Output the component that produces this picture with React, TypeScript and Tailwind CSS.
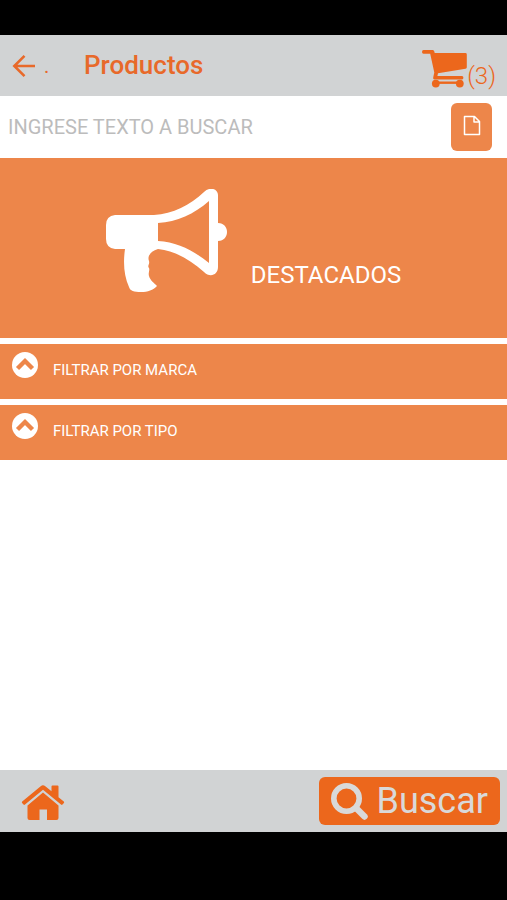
import React from "react";

interface IconProps {
  className?: string;
}

const BackIcon: React.FC<IconProps> = ({ className }) => (
  <svg viewBox="0 0 24 24" className={className} fill="none" stroke="currentColor" strokeWidth="2.6" aria-hidden="true">
    <path d="M23 12H2.5M12.5 1.8 2.3 12l10.2 10.2" />
  </svg>
);

const CartIcon: React.FC<IconProps> = ({ className }) => (
  <svg viewBox="0 0 45 38" className={className} fill="currentColor" aria-hidden="true">
    <path d="M1.5 0H10.5C11.3 0 12 .6 12.2 1.3L12.7 3H43.4Q44.8 3 44.8 4.4V17.2Q44.8 18.5 43.5 18.8L16 23.2L15.4 26H40Q41.4 26 41.4 27.7T40 29.5H12.4Q10.8 29.5 11.2 27.6L12.3 22.6L8.2 3.7H1.5Q0 3.7 0 1.9T1.5 0Z" />
    <circle cx="13.8" cy="33.6" r="3.9" />
    <circle cx="37.8" cy="33.6" r="3.9" />
    <path d="M14 31.5h24v2.4H14z" />
  </svg>
);

const FileIcon: React.FC<IconProps> = ({ className }) => (
  <svg viewBox="0 0 18 21" className={className} fill="none" stroke="currentColor" strokeWidth="1.5" strokeLinejoin="round" aria-hidden="true">
    <path d="M1.5 1.5h10l5 5v13h-15zM11 1.5V7h5.5" />
  </svg>
);

const MegaphoneIcon: React.FC<IconProps> = ({ className }) => (
  <svg viewBox="0 0 121 104" className={className} fill="currentColor" aria-hidden="true">
    <path
      fillRule="evenodd"
      d="M9 26H48C67 25 84 16 98 3C104-3 112 0 112 6V34C124 34 124 52 112 52V78C112 86 104 89 98 83C84 71 70 62 52 60C45 62 41 67 43 72C44 75 41 77 43 79C44 81 42 84 43 87C44 91 48 94 51 97C47 101 42 103 35 103C28 103 24 102 23 98C18 87 17 74 19 60H9Q0 59 0 50V36Q0 27 9 26ZM52 34V52C72 53 88 62 103 74V12C88 25 71 33 52 34Z"
    />
  </svg>
);

const ChevronCircleIcon: React.FC<IconProps> = ({ className }) => (
  <svg viewBox="0 0 26 26" className={className} aria-hidden="true">
    <circle cx="13" cy="13" r="13" fill="currentColor" />
    <path d="m5.5 16.5 7.5-7.5 7.5 7.5" fill="none" stroke="#ed864a" strokeWidth="4.4" />
  </svg>
);

const HomeIcon: React.FC<IconProps> = ({ className }) => (
  <svg viewBox="0 0 44 35" className={className} fill="currentColor" aria-hidden="true">
    <path d="M22 7.5 37.5 20.5V33Q37.5 35 35.5 35H26V24.5H18.5V35H8.5Q6.5 35 6.5 33V20.5Z" />
    <path d="M19.7 1.2Q22-.6 24.3 1.2L30.5 6.2V1.5Q30.5.6 31.5.6H36.5Q37.5.6 37.5 1.5V12.2L42.8 16.6Q43.5 17.3 42.9 18L41.5 19.6Q40.8 20.2 40 19.6L22 4.7L4 19.6Q3.2 20.2 2.5 19.6L1.1 18Q.5 17.3 1.2 16.6Z" />
  </svg>
);

const SearchIcon: React.FC<IconProps> = ({ className }) => (
  <svg viewBox="0 0 37 37" className={className} fill="none" stroke="currentColor" aria-hidden="true">
    <circle cx="15.5" cy="15.5" r="12.7" strokeWidth="5.6" />
    <path d="m25 25 8.5 8.5" strokeWidth="6.4" strokeLinecap="round" />
  </svg>
);

const filters = ["FILTRAR POR MARCA", "FILTRAR POR TIPO"];

const App: React.FC = () => {
  return (
    <div className="flex min-h-screen flex-col bg-black pt-[35px] pb-[68px] font-['Roboto',sans-serif]">
      <header className="flex h-[61px] items-center bg-[#d1d3d4] pr-[11px] pl-3 text-[#e8692a]">
        <button type="button" aria-label="Volver" className="flex w-[72px] items-center gap-2">
          <BackIcon className="h-6 w-6" />
          <span className="text-xl leading-6">.</span>
        </button>
        <h1 className="flex-1 pb-0.5 text-[26px] leading-8 font-medium">Productos</h1>
        <a href="#carrito" aria-label="Carrito" className="flex items-start pt-2 text-[#ec671c]">
          <CartIcon className="mt-0.5 h-[38px] w-[45px]" />
          <span className="pt-3 text-2xl leading-8 font-light">(3)</span>
        </a>
      </header>

      <main className="flex flex-1 flex-col bg-white">
        <form className="flex h-[62px] items-center justify-between pr-[15px] pl-2">
          <input
            type="text"
            aria-label="Texto a buscar"
            placeholder="INGRESE TEXTO A BUSCAR"
            className="min-w-0 flex-1 text-xl text-gray-700 outline-none placeholder:text-[#bcbcbc]"
          />
          <button
            type="button"
            aria-label="Documento"
            className="flex h-12 w-[41px] items-center justify-center rounded-md bg-[#ed864a] pb-1 text-white"
          >
            <FileIcon className="h-[21px] w-[18px]" />
          </button>
        </form>

        <div className="flex flex-col gap-1.5">
          <button
            type="button"
            className="flex h-[180px] items-center justify-center gap-6 bg-[#ed864a] pb-3.5 text-white"
          >
            <MegaphoneIcon className="h-[104px] w-[121px]" />
            <span className="pt-[68px] text-2xl">DESTACADOS</span>
          </button>
          {filters.map((label) => (
            <button
              key={label}
              type="button"
              className="flex h-[55px] items-start gap-[15px] bg-[#ed864a] px-3 pt-2 text-left text-white"
            >
              <ChevronCircleIcon className="h-[26px] w-[26px]" />
              <span className="pt-2 text-[15px] leading-5">{label}</span>
            </button>
          ))}
        </div>
      </main>

      <footer className="flex h-[62px] items-center justify-between bg-[#d1d3d4] pr-[7px] pl-[21px]">
        <a href="#inicio" aria-label="Inicio" className="pt-0.5 text-[#ec671c]">
          <HomeIcon className="h-[35px] w-11" />
        </a>
        <button
          type="button"
          className="flex h-12 items-center gap-[9px] rounded-md bg-[#ec671c] px-3 text-[#d9d9d9]"
        >
          <SearchIcon className="h-[37px] w-[37px]" />
          <span className="text-4xl">Buscar</span>
        </button>
      </footer>
    </div>
  );
};

export default App;
